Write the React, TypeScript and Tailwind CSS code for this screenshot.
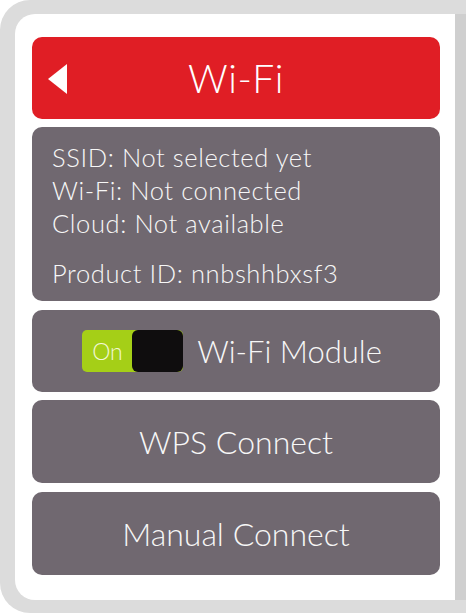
import React, { useState } from 'react';

function Card({ children, className = '' }: { children: React.ReactNode; className?: string }) {
  return <div className={`rounded-[10px] bg-[#706870] text-[#f7f7f7] ${className}`}>{children}</div>;
}

export default function App() {
  const [on, setOn] = useState(true);

  return (
    <div className="h-[613px] w-[466px] overflow-hidden bg-white font-['Lato',sans-serif] font-light">
      <div className="h-[613px] w-[496px] rounded-[30px] bg-[#dcdcdc] pl-[15px] pt-[14px]">
        <div className="flex h-[586px] w-[451px] flex-col gap-[8px] rounded-l-[20px] border-r-[11px] border-[#cfcfcf] bg-white pl-[17px] pr-[15px] pt-[23px]">
          <div className="relative flex h-[82px] items-center justify-center rounded-[10px] bg-[#e01e25] text-white">
            <svg className="absolute left-[16px] top-[27px]" width="19" height="30" viewBox="0 0 19 30">
              <polygon points="19,0 19,30 0,15" fill="#fff" />
            </svg>
            <span className="text-[39px] leading-none tracking-[0.5px]">Wi-Fi</span>
          </div>

          <Card className="h-[174px] px-[20px] pt-[14px] text-[25.5px] leading-[33px] tracking-[0.6px]">
            <div>SSID: Not selected yet</div>
            <div>Wi-Fi: Not connected</div>
            <div>Cloud: Not available</div>
            <div className="mt-[17px]">Product ID: nnbshhbxsf3</div>
          </Card>

          <Card className="mt-px flex h-[82px] items-center justify-center gap-[14px] pr-[8px]">
            <button
              onClick={() => setOn(!on)}
              className="relative flex h-[42px] w-[101px] items-center rounded-[5px] bg-[#a5cf17]"
            >
              <span className="ml-[10px] text-[23px] leading-none text-[#f3f8d6]">On</span>
              <span className="absolute right-0 top-0 h-[42px] w-[51px] rounded-[6px] bg-[#0f0d0e]" />
            </button>
            <span className="text-[31px] leading-none">Wi-Fi Module</span>
          </Card>

          <Card className="flex h-[83px] items-center justify-center">
            <span className="text-[32px] leading-none">WPS Connect</span>
          </Card>

          <Card className="mt-px flex h-[83px] items-center justify-center">
            <span className="text-[32px] leading-none">Manual Connect</span>
          </Card>
        </div>
      </div>
    </div>
  );
}
